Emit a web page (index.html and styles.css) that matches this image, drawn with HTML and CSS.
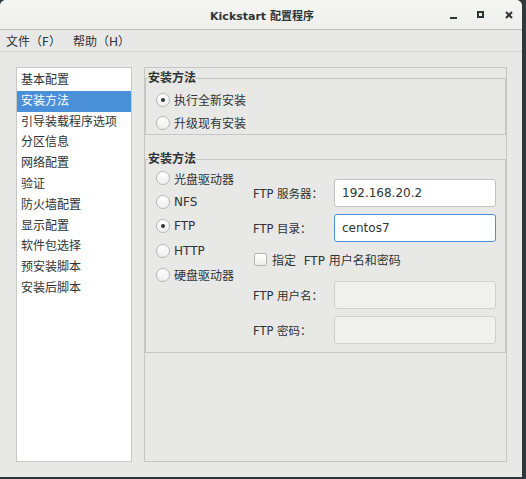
FILE: index.html
```html
<!DOCTYPE html>
<html lang="zh">
<head>
<meta charset="utf-8">
<title>Kickstart 配置程序</title>
<link rel="stylesheet" href="styles.css">
</head>
<body>
<div class="window">
  <div class="titlebar">
    <div class="title">Kickstart 配置程序</div>
    <div class="controls">
      <span class="btn-min"></span>
      <span class="btn-max"></span>
      <svg class="btn-close" width="8" height="8" viewBox="0 0 8 8"><path d="M1 1L7 7M7 1L1 7" stroke="#2e3436" stroke-width="2"/></svg>
    </div>
  </div>
  <div class="menubar">
    <span class="menu-item">文件（F）</span>
    <span class="menu-item">帮助（H）</span>
  </div>
  <div class="content">
    <ul class="sidebar">
      <li>基本配置</li>
      <li class="selected">安装方法</li>
      <li>引导装载程序选项</li>
      <li>分区信息</li>
      <li>网络配置</li>
      <li>验证</li>
      <li>防火墙配置</li>
      <li>显示配置</li>
      <li>软件包选择</li>
      <li>预安装脚本</li>
      <li>安装后脚本</li>
    </ul>
    <div class="panel">
      <fieldset class="frame frame-top">
        <legend>安装方法</legend>
        <div class="radio-list">
          <div class="radio-row"><span class="radio checked"></span><span>执行全新安装</span></div>
          <div class="radio-row"><span class="radio"></span><span>升级现有安装</span></div>
        </div>
      </fieldset>
      <fieldset class="frame frame-method">
        <legend>安装方法</legend>
        <div class="method-body">
          <div class="method-list">
            <div class="radio-row"><span class="radio"></span><span>光盘驱动器</span></div>
            <div class="radio-row"><span class="radio"></span><span>NFS</span></div>
            <div class="radio-row"><span class="radio checked"></span><span>FTP</span></div>
            <div class="radio-row"><span class="radio"></span><span>HTTP</span></div>
            <div class="radio-row"><span class="radio"></span><span>硬盘驱动器</span></div>
          </div>
          <div class="ftp-form">
            <div class="form-row"><span class="label">FTP 服务器：</span><span class="entry">192.168.20.2</span></div>
            <div class="form-row"><span class="label">FTP 目录：</span><span class="entry focused">centos7</span></div>
            <div class="check-row"><span class="checkbox"></span><span>指定&nbsp; FTP 用户名和密码</span></div>
            <div class="form-row"><span class="label">FTP 用户名：</span><span class="entry disabled"></span></div>
            <div class="form-row"><span class="label">FTP 密码：</span><span class="entry disabled"></span></div>
          </div>
        </div>
      </fieldset>
    </div>
  </div>
</div>
</body>
</html>
```
FILE: styles.css
```css
* { box-sizing: border-box; }
html, body {
  margin: 0;
  padding: 0;
}
body {
  width: 526px;
  height: 479px;
  background: #2f393b;
  font-family: "DejaVu Sans", "Noto Sans CJK SC", sans-serif;
  font-size: 12px;
  color: #2e3436;
  overflow: hidden;
}
.window {
  width: 522px;
  height: 477px;
  background: #e8e8e7;
  border-radius: 6px 6px 0 0;
  display: flex;
  flex-direction: column;
  overflow: hidden;
}
.titlebar {
  height: 30px;
  flex: none;
  background: linear-gradient(#f5f5f4, #eeeeed);
  border-bottom: 1px solid #bebebc;
  position: relative;
  display: flex;
  align-items: center;
  justify-content: center;
}
.title {
  font-size: 11px;
  font-weight: bold;
  color: #2e3436;
  padding-top: 1px;
  padding-left: 2px;
}
.controls {
  position: absolute;
  right: 0;
  top: 0;
  height: 29px;
  display: flex;
  align-items: center;
}
.btn-min {
  width: 7px;
  height: 2px;
  background: #2e3436;
  margin-top: 6px;
  margin-right: 20px;
}
.btn-max {
  width: 7px;
  height: 7px;
  border: 2px solid #2e3436;
  margin-right: 21px;
}
.btn-close {
  margin-right: 9px;
}
.menubar {
  height: 22px;
  flex: none;
  display: flex;
  align-items: center;
  gap: 12px;
  padding-left: 6px;
  border-bottom: 1px solid #d5d5d3;
  background: #e8e8e7;
}
.menu-item {
  font-size: 12px;
}
.content {
  flex: 1;
  display: flex;
  gap: 12px;
  padding: 15px 16px 15px 16px;
  background: #e8e8e6;
}
.sidebar {
  list-style: none;
  margin: 0;
  padding: 2px 0 0 0;
  width: 116px;
  flex: none;
  background: #fff;
  border: 1px solid #c8c8c6;
}
.sidebar li {
  height: 20.8px;
  line-height: 20.8px;
  padding-left: 4px;
  white-space: nowrap;
}
.sidebar li.selected {
  background: #4a90d9;
  color: #fff;
}
.panel {
  flex: 1;
  border: 1px solid #c6c6c4;
  padding: 3px 0 0 0;
}
.frame {
  margin: 0;
  border: 1px solid #c6c6c4;
  padding: 0;
  min-width: 0;
}
.frame legend {
  font-weight: bold;
  padding: 0;
  margin-left: 2px;
  font-size: 12px;
  line-height: 15px;
}
.radio-list {
  padding: 2px 0 0 10px;
  height: 48px;
}
.radio-row {
  display: flex;
  align-items: center;
  gap: 4px;
  height: 23px;
}
.radio {
  width: 14px;
  height: 14px;
  border-radius: 50%;
  border: 1px solid #b5b5b2;
  background: linear-gradient(#ffffff, #eeeeec);
  display: flex;
  align-items: center;
  justify-content: center;
  flex: none;
}
.radio.checked::after {
  content: "";
  width: 4px;
  height: 4px;
  border-radius: 50%;
  background: #2e3436;
}
.frame-method {
  margin-top: 17px;
}
.method-body {
  display: flex;
  margin-top: -1px;
  padding: 0 9px 8px 10px;
}
.method-list {
  width: 97px;
  display: flex;
  flex-direction: column;
}
.method-list .radio-row {
  height: 24.2px;
}
.ftp-form {
  flex: 1;
  display: flex;
  flex-direction: column;
  gap: 7px;
  padding-top: 13px;
}
.form-row {
  display: flex;
  align-items: center;
  height: 28px;
}
.label {
  width: 81px;
  flex: none;
  font-size: 11.5px;
}
.entry {
  width: 162px;
  height: 28px;
  border: 1px solid #c2c2bf;
  border-radius: 3px;
  background: #fff;
  padding-left: 7px;
  line-height: 26px;
  font-size: 12px;
}
.entry.focused {
  border-color: #4a90d9;
}
.entry.disabled {
  background: #f0f0ee;
  border-color: #cfcfcd;
}
.check-row {
  display: flex;
  align-items: center;
  gap: 5px;
  height: 16px;
  margin: 2px 0 7px 1px;
}
.checkbox {
  width: 13px;
  height: 13px;
  border: 1px solid #b5b5b2;
  border-radius: 2px;
  background: linear-gradient(#ffffff, #eeeeec);
  flex: none;
}
```
